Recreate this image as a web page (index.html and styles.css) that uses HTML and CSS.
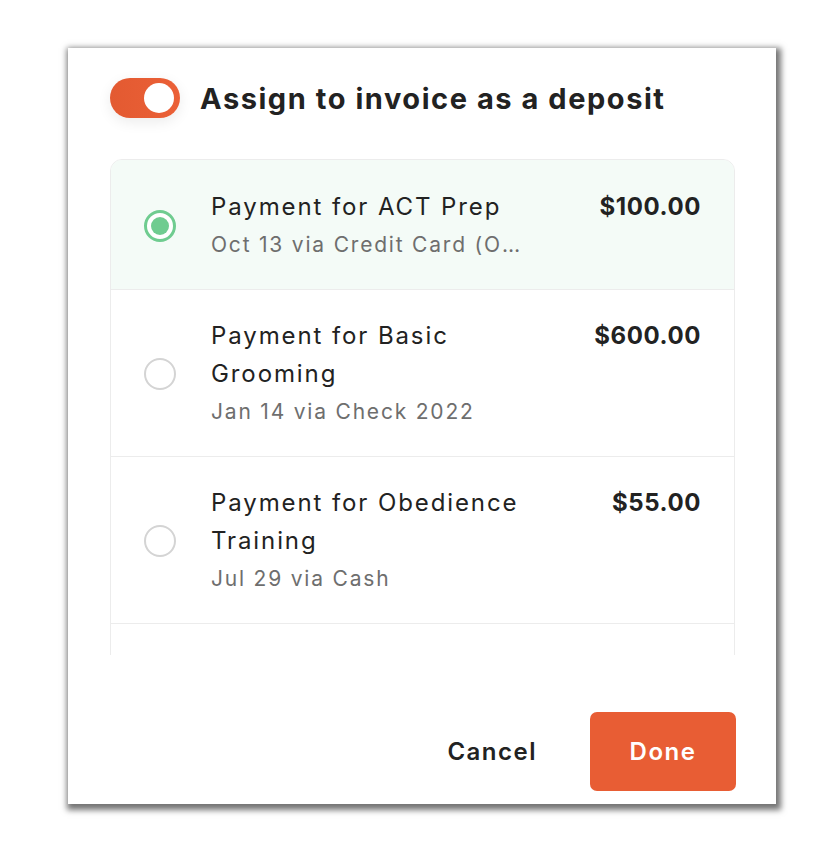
FILE: index.html
```html
<!DOCTYPE html>
<html>
<head>
<meta charset="utf-8">
<link rel="stylesheet" href="styles.css">
</head>
<body>
<div class="panel">
  <div class="header">
    <div class="toggle"><div class="knob"></div></div>
    <h1 class="title">Assign to invoice as a deposit</h1>
  </div>
  <div class="scroller">
    <div class="list">
      <div class="row selected">
        <div class="radio on"><span></span></div>
        <div class="info">
          <div class="name">Payment for ACT Prep</div>
          <div class="meta ellipsis">Oct 13 via Credit Card (Online)</div>
        </div>
        <div class="amount">$100.00</div>
      </div>
      <div class="row">
        <div class="radio"></div>
        <div class="info">
          <div class="name">Payment for Basic Grooming</div>
          <div class="meta">Jan 14 via Check 2022</div>
        </div>
        <div class="amount">$600.00</div>
      </div>
      <div class="row">
        <div class="radio"></div>
        <div class="info">
          <div class="name">Payment for Obedience Training</div>
          <div class="meta">Jul 29 via Cash</div>
        </div>
        <div class="amount">$55.00</div>
      </div>
      <div class="row placeholder"></div>
    </div>
  </div>
  <div class="footer">
    <button class="btn cancel">Cancel</button>
    <button class="btn done">Done</button>
  </div>
</div>
</body>
</html>
```
FILE: styles.css
```css
html, body {
  margin: 0;
  padding: 0;
  background: #ffffff;
}
body {
  font-family: "Inter", "Noto Sans", sans-serif;
  color: #222;
  padding-bottom: 60px;
}
.panel {
  margin: 48px 0 0 68px;
  width: 708px;
  height: 756px;
  background: #fff;
  box-shadow: 2px 3px 6px 3px rgba(0,0,0,0.55);
  box-sizing: border-box;
  padding: 30px 41px 13px 42px;
  display: flex;
  flex-direction: column;
}
.header {
  display: flex;
  align-items: center;
  gap: 20px;
  height: 40px;
}
.toggle {
  width: 70px;
  height: 40px;
  border-radius: 20px;
  background: linear-gradient(90deg, #e35a31, #eb6037);
  box-sizing: border-box;
  padding: 5px 6px;
  display: flex;
  justify-content: flex-end;
  box-shadow: 0 4px 14px rgba(0,0,0,0.08);
  flex: none;
}
.knob {
  width: 30px;
  height: 30px;
  border-radius: 50%;
  background: #fff;
}
.title {
  margin: 0;
  font-size: 29px;
  font-weight: 700;
  color: #222;
  letter-spacing: 1.55px;
}
.scroller {
  margin-top: 41px;
  height: 496px;
  overflow: hidden;
  flex: none;
}
.list {
  border: 1px solid #ececec;
  border-radius: 12px;
  overflow: hidden;
}
.row {
  display: flex;
  align-items: center;
  padding: 27px 33px 26px 32px;
  border-top: 1px solid #ececec;
}
.row:first-child {
  border-top: none;
  padding-top: 28px;
}
.row.placeholder {
  height: 120px;
  box-sizing: border-box;
}
.row.selected {
  background: #f4fbf7;
}
.radio {
  width: 32px;
  height: 32px;
  margin-left: 1px;
  border-radius: 50%;
  border: 2px solid #d4d4d4;
  box-sizing: border-box;
  flex: none;
  display: flex;
  align-items: center;
  justify-content: center;
  background: #fff;
}
.radio.on {
  border: 3px solid #6fcc90;
}
.radio.on span {
  width: 18px;
  height: 18px;
  border-radius: 50%;
  background: #6fcc90;
}
.info {
  margin-left: 35px;
  width: 320px;
  flex: none;
}
.name {
  font-size: 24px;
  line-height: 38px;
  color: #222;
  letter-spacing: 1.9px;
}
.meta {
  font-size: 21px;
  line-height: 37px;
  color: #6e6e6e;
  letter-spacing: 1.8px;
}
.ellipsis {
  white-space: nowrap;
  overflow: hidden;
  text-overflow: ellipsis;
}
.amount {
  margin-left: auto;
  align-self: flex-start;
  font-size: 24px;
  line-height: 38px;
  font-weight: 700;
  color: #222;
  letter-spacing: 0.6px;
}
.footer {
  margin-top: auto;
  display: flex;
  justify-content: flex-end;
  align-items: center;
  gap: 28px;
  margin-right: -1px;
}
.btn {
  font-family: inherit;
  border: none;
  font-size: 24px;
  font-weight: 600;
  cursor: pointer;
  letter-spacing: 1.5px;
}
.cancel {
  background: none;
  color: #222;
  padding: 0 25px;
}
.done {
  background: #e85d34;
  color: #fff;
  width: 146px;
  height: 79px;
  border-radius: 7px;
}
```
